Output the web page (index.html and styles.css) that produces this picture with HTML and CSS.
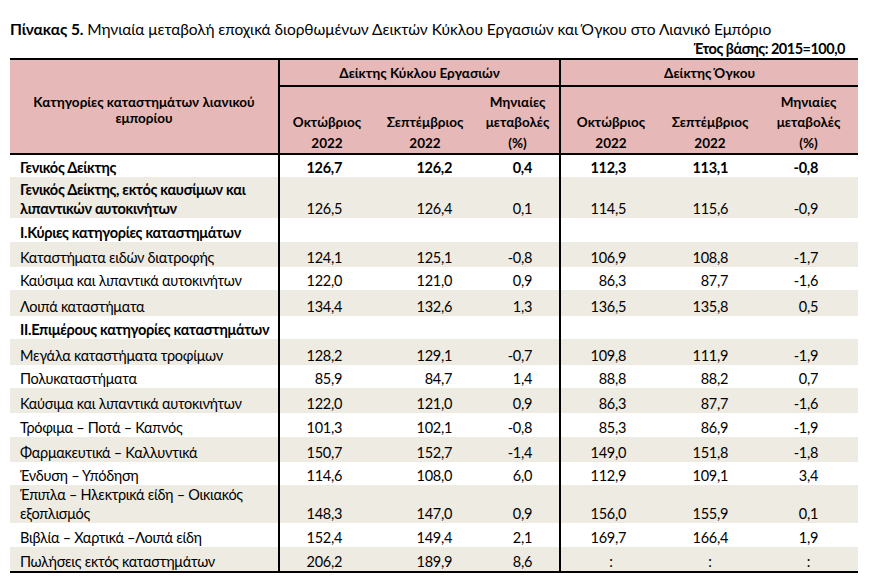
FILE: index.html
```html
<!DOCTYPE html>
<html lang="el">
<head>
    <meta charset="UTF-8">
    <meta name="viewport" content="width=device-width, initial-scale=1.0">
    <title>Πίνακας 5</title>
    <link rel="stylesheet" href="styles.css">
</head>
<body>

    <h1 class="title"><b>Πίνακας 5.</b> Μηνιαία μεταβολή εποχικά διορθωμένων Δεικτών Κύκλου Εργασιών και Όγκου στο Λιανικό Εμπόριο</h1>
    <div class="base">Έτος βάσης: 2015=100,0</div>

    <table class="stats">
        <colgroup>
            <col class="c-name">
            <col class="c-a">
            <col class="c-b">
            <col class="c-c">
            <col class="c-d">
            <col class="c-e">
            <col class="c-f">
        </colgroup>
        <thead>
            <tr class="group">
                <th rowspan="3" class="cat">Κατηγορίες καταστημάτων λιανικού<br>εμπορίου</th>
                <th colspan="3" class="sep under">Δείκτης Κύκλου Εργασιών</th>
                <th colspan="3" class="sep under">Δείκτης Όγκου</th>
            </tr>
            <tr class="months">
                <th class="sep">Οκτώβριος</th>
                <th>Σεπτέμβριος</th>
                <th>Μηνιαίες<br>μεταβολές</th>
                <th class="sep">Οκτώβριος</th>
                <th>Σεπτέμβριος</th>
                <th>Μηνιαίες<br>μεταβολές</th>
            </tr>
            <tr class="years">
                <th class="sep">2022</th>
                <th>2022</th>
                <th>(%)</th>
                <th class="sep">2022</th>
                <th>2022</th>
                <th>(%)</th>
            </tr>
        </thead>
        <tbody>
            <tr class="bold">
                <td>Γενικός Δείκτης</td>
                <td>126,7</td><td>126,2</td><td>0,4</td>
                <td>112,3</td><td>113,1</td><td>-0,8</td>
            </tr>
            <tr class="shade bold-name tall">
                <td>Γενικός Δείκτης, εκτός καυσίμων και<br>λιπαντικών αυτοκινήτων</td>
                <td>126,5</td><td>126,4</td><td>0,1</td>
                <td>114,5</td><td>115,6</td><td>-0,9</td>
            </tr>
            <tr class="bold-name">
                <td>Ι.Κύριες κατηγορίες καταστημάτων</td>
                <td></td><td></td><td></td>
                <td></td><td></td><td></td>
            </tr>
            <tr class="shade">
                <td>Καταστήματα ειδών διατροφής</td>
                <td>124,1</td><td>125,1</td><td>-0,8</td>
                <td>106,9</td><td>108,8</td><td>-1,7</td>
            </tr>
            <tr>
                <td>Καύσιμα και λιπαντικά αυτοκινήτων</td>
                <td>122,0</td><td>121,0</td><td>0,9</td>
                <td>86,3</td><td>87,7</td><td>-1,6</td>
            </tr>
            <tr class="shade">
                <td>Λοιπά καταστήματα</td>
                <td>134,4</td><td>132,6</td><td>1,3</td>
                <td>136,5</td><td>135,8</td><td>0,5</td>
            </tr>
            <tr class="bold-name">
                <td>ΙΙ.Επιμέρους κατηγορίες καταστημάτων</td>
                <td></td><td></td><td></td>
                <td></td><td></td><td></td>
            </tr>
            <tr class="shade">
                <td>Μεγάλα καταστήματα τροφίμων</td>
                <td>128,2</td><td>129,1</td><td>-0,7</td>
                <td>109,8</td><td>111,9</td><td>-1,9</td>
            </tr>
            <tr>
                <td>Πολυκαταστήματα</td>
                <td>85,9</td><td>84,7</td><td>1,4</td>
                <td>88,8</td><td>88,2</td><td>0,7</td>
            </tr>
            <tr class="shade">
                <td>Καύσιμα και λιπαντικά αυτοκινήτων</td>
                <td>122,0</td><td>121,0</td><td>0,9</td>
                <td>86,3</td><td>87,7</td><td>-1,6</td>
            </tr>
            <tr>
                <td>Τρόφιμα – Ποτά – Καπνός</td>
                <td>101,3</td><td>102,1</td><td>-0,8</td>
                <td>85,3</td><td>86,9</td><td>-1,9</td>
            </tr>
            <tr class="shade">
                <td>Φαρμακευτικά – Καλλυντικά</td>
                <td>150,7</td><td>152,7</td><td>-1,4</td>
                <td>149,0</td><td>151,8</td><td>-1,8</td>
            </tr>
            <tr>
                <td>Ένδυση – Υπόδηση</td>
                <td>114,6</td><td>108,0</td><td>6,0</td>
                <td>112,9</td><td>109,1</td><td>3,4</td>
            </tr>
            <tr class="shade wrap">
                <td>Έπιπλα – Ηλεκτρικά είδη – Οικιακός<br>εξοπλισμός</td>
                <td>148,3</td><td>147,0</td><td>0,9</td>
                <td>156,0</td><td>155,9</td><td>0,1</td>
            </tr>
            <tr>
                <td>Βιβλία – Χαρτικά –Λοιπά είδη</td>
                <td>152,4</td><td>149,4</td><td>2,1</td>
                <td>169,7</td><td>166,4</td><td>1,9</td>
            </tr>
            <tr class="shade">
                <td>Πωλήσεις εκτός καταστημάτων</td>
                <td>206,2</td><td>189,9</td><td>8,6</td>
                <td class="na">:</td><td class="na">:</td><td class="na">:</td>
            </tr>
        </tbody>
    </table>

</body>
</html>
```
FILE: styles.css
```css
* {
    padding: 0;
    margin: 0;
    box-sizing: border-box;
}

body {
    padding: 19px 10px 0 10px;
    font-family: Lato, "Open Sans", sans-serif;
    color: #000;
    background-color: #fff;
}

.title {
    font-size: 15.5px;
    font-weight: normal;
    line-height: 20px;
    letter-spacing: -0.08px;
    white-space: nowrap;
}

.base {
    width: 848px;
    padding-right: 13px;
    text-align: right;
    font-weight: bold;
    font-size: 14.5px;
    letter-spacing: -0.5px;
    line-height: 18px;
    margin-top: 1px;
}

.stats {
    width: 848px;
    table-layout: fixed;
    border-collapse: collapse;
    border-top: 2px solid #000;
    border-bottom: 2px solid #000;
    font-size: 14.5px;
}

.c-name { width: 269px; }
.c-a { width: 95px; }
.c-b { width: 102px; }
.c-c { width: 84px; }
.c-d { width: 101px; }
.c-e { width: 98px; }
.c-f { width: 99px; }

thead th {
    background-color: #e6b8b7;
    font-size: 13.5px;
    font-weight: bold;
    line-height: 20px;
}

thead tr.years th {
    border-bottom: 2px solid #000;
    vertical-align: top;
    padding-top: 1px;
}

.group {
    height: 27px;
}

.months {
    height: 46px;
}

.months th {
    vertical-align: bottom;
}

.years {
    height: 22px;
}

.cat {
    line-height: 16px;
    border-bottom: 2px solid #000;
    padding-top: 6px;
}

.sep {
    border-left: 2px solid #000;
}

.under {
    border-bottom: 2px solid #000;
}

tbody tr {
    height: 23.25px;
}

tbody tr.shade {
    height: 25.5px;
}

tbody tr.tall {
    height: 41px;
}

tbody tr.wrap {
    height: 37px;
}

tbody td {
    vertical-align: bottom;
    line-height: 19px;
    text-align: right;
    letter-spacing: -0.3px;
    white-space: nowrap;
}

tbody td:first-child {
    text-align: left;
    padding-left: 10px;
}

tbody td:nth-child(2) { padding-right: 32px; border-left: 2px solid #000; }
tbody td:nth-child(3) { padding-right: 24px; }
tbody td:nth-child(4) { padding-right: 27px; }
tbody td:nth-child(5) { padding-right: 35px; border-left: 2px solid #000; }
tbody td:nth-child(6) { padding-right: 31px; }
tbody td:nth-child(7) { padding-right: 40px; }

tbody td.na {
    text-align: center;
    padding-right: 0;
}

.shade td {
    background-color: #eeebe3;
}

.bold td {
    font-weight: bold;
}

.bold-name td:first-child {
    font-weight: bold;
}
```
